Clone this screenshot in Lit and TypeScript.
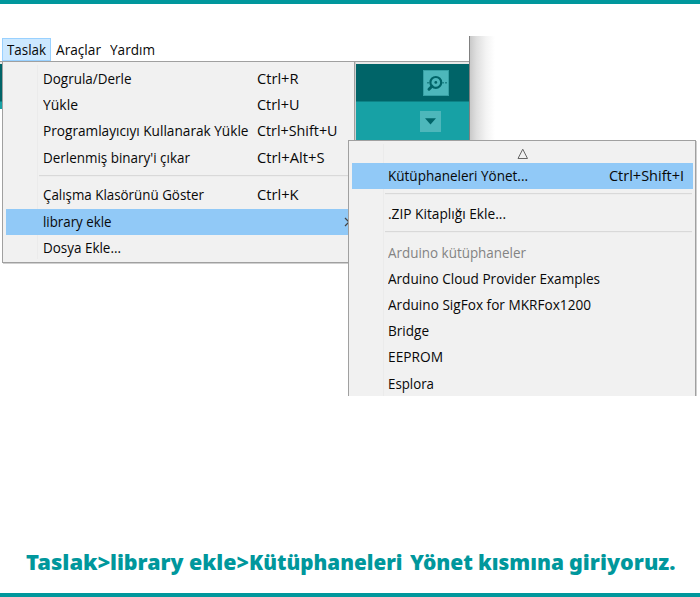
import { LitElement, html, css, nothing } from "lit";
import { customElement, property } from "lit/decorators.js";
import { styleMap } from "lit/directives/style-map.js";

// A single line of text, condensed or widened to a given advance width.
@customElement("fit-label")
class FitLabel extends LitElement {
  @property({ type: Number }) w = 0;
  static styles = css`
    :host { display: block; white-space: nowrap; }
    .t { display: inline-block; transform-origin: 0 50%; }
  `;
  firstUpdated() {
    const t = this.renderRoot.querySelector(".t") as HTMLElement;
    const natural = t.getBoundingClientRect().width;
    if (natural && this.w) t.style.transform = `scaleX(${this.w / natural})`;
  }
  render() {
    return html`<span class="t"><slot></slot></span>`;
  }
}

interface Item {
  label?: string;
  w?: number;
  keys?: string;
  kw?: number;
  active?: boolean;
  muted?: boolean;
  arrow?: boolean;
  sep?: boolean;
}

const sketchMenu: Item[] = [
  { label: "Dogrula/Derle", w: 88.5, keys: "Ctrl+R", kw: 41.5 },
  { label: "Yükle", w: 35, keys: "Ctrl+U", kw: 42.5 },
  { label: "Programlayıcıyı Kullanarak Yükle", w: 205.5, keys: "Ctrl+Shift+U", kw: 80.5 },
  { label: "Derlenmiş binary'i çıkar", w: 147, keys: "Ctrl+Alt+S", kw: 67.5 },
  { sep: true },
  { label: "Çalışma Klasörünü Göster", w: 161, keys: "Ctrl+K", kw: 41.5 },
  { label: "library ekle", w: 68.5, active: true, arrow: true },
  { label: "Dosya Ekle...", w: 78 },
];

const libraryMenu: Item[] = [
  { label: "Kütüphaneleri Yönet...", w: 140, keys: "Ctrl+Shift+I", kw: 75, active: true },
  { sep: true },
  { label: ".ZIP Kitaplığı Ekle...", w: 118 },
  { sep: true },
  { label: "Arduino kütüphaneler", w: 138, muted: true },
  { label: "Arduino Cloud Provider Examples", w: 212 },
  { label: "Arduino SigFox for MKRFox1200", w: 203 },
  { label: "Bridge", w: 41 },
  { label: "EEPROM", w: 55 },
  { label: "Esplora", w: 46 },
];

// Caption words: glyph width and the advance to the next word.
const caption = [
  { text: "Taslak>", w: 84.5, step: 84.5 },
  { text: "library ekle>", w: 139, step: 139 },
  { text: "Kütüphaneleri", w: 153.5, step: 160.5 },
  { text: "Yönet", w: 63, step: 68.5 },
  { text: "kısmına", w: 86, step: 90.5 },
  { text: "giriyoruz.", w: 106.5, step: 107 },
];

@customElement("app-root")
class AppRoot extends LitElement {
  static styles = css`
    :host {
      display: flex;
      flex-direction: column;
      box-sizing: border-box;
      width: 700px;
      height: 597px;
      overflow: hidden;
      background: #fff;
      border-top: 4px solid #00979c;
      border-bottom: 4px solid #00979c;
      font: 14px/26px "Open Sans", "Noto Sans", sans-serif;
      color: #080808;
    }
    .shot {
      position: relative;
      margin-top: 32px;
      height: 360px;
      overflow: hidden;
      flex: none;
    }
    .window { display: flex; height: 105px; }
    .ide { width: 469px; display: flex; flex-direction: column; }
    .edge {
      width: 26px;
      box-sizing: border-box;
      border-left: 1px solid #808080;
      background: linear-gradient(90deg, #c9c9c9, #dedede 25%, #f4f4f4 65%, #fff);
    }
    .bar {
      display: flex;
      box-sizing: border-box;
      height: 26px;
      padding: 2px 0 0 2px;
      border-bottom: 1px solid #a0a0a0;
    }
    .tab {
      box-sizing: border-box;
      height: 23px;
      line-height: 22px;
      border: 1px solid transparent;
      padding-left: 4px;
      width: 49px;
    }
    .tab.open { background: #cce8ff; border-color: #99d1ff; }
    .tab + .tab { width: 54px; }
    .gap { height: 2px; background: #e8e8e8; }
    .tools {
      height: 37px;
      background: #006468;
      display: flex;
      justify-content: flex-end;
      align-items: center;
      padding-right: 20px;
      border-bottom: 1px solid #0d8286;
    }
    .tabs {
      height: 39px;
      flex: none;
      background: linear-gradient(90deg, #fff 2px, transparent 2px) 0 7px no-repeat, #17a1a5;
      display: flex;
      justify-content: flex-end;
      align-items: center;
      padding-right: 28px;
    }
    svg { display: block; }
    .menu {
      position: absolute;
      box-sizing: border-box;
      border: 1px solid #a0a0a0;
      background: #f1f1f1;
      box-shadow: 1px 1px #d0d0d0;
    }
    .sketch { left: 2px; top: 25px; width: 353px; height: 202px; padding: 4px 2px 4px 3px; }
    .library { left: 348px; top: 104px; width: 348px; height: 270px; padding: 21.6px 2px 0 3px; }
    .gutter { position: absolute; top: 3px; bottom: 3px; left: 34px; width: 1px; background: #ebebeb; }
    .item { position: relative; display: flex; height: 26.2px; line-height: 26px; }
    .active { background: #91c9f7; }
    .muted { color: #838383; }
    .label { width: 215px; padding-left: 37px; flex: none; }
    .library .label { width: 221px; padding-left: 36px; }
    .sketch .label { width: 214px; }
    .sep { height: 11.6px; display: flex; align-items: flex-start; padding: 4px 1px 0 33px; box-sizing: border-box; }
    .library .sep { height: 12.3px; }
    .sep::before { content: ""; flex: 1; height: 1px; background: #d9d9d9; border-bottom: 1px solid #ededed; }
    .chevron { position: absolute; left: 338px; top: 8px; }
    .up { position: absolute; left: 168px; top: 7px; }
    .caption {
      display: flex;
      margin: 149px 0 0 25.5px;
      font-family: "Noto Sans", "Open Sans", sans-serif;
      font-size: 21.5px;
      line-height: 33px;
      font-weight: 900;
      color: #00979c;
    }
    .caption > * { flex: none; }
  `;

  row(i: Item) {
    if (i.sep) return html`<div class="sep"></div>`;
    return html`<div class="item ${i.active ? "active" : ""} ${i.muted ? "muted" : ""}">
      <fit-label class="label" .w=${i.w!}>${i.label}</fit-label>
      ${i.keys ? html`<fit-label .w=${i.kw!}>${i.keys}</fit-label>` : nothing}
      ${i.arrow
        ? html`<svg class="chevron" width="6" height="10"><path d="M1 1L5 5L1 9" fill="none" stroke="#444" stroke-width="1.2"/></svg>`
        : nothing}
    </div>`;
  }

  render() {
    return html`
      <div class="shot">
        <div class="window">
          <div class="ide">
            <div class="bar">
              <div class="tab open"><fit-label .w=${39}>Taslak</fit-label></div>
              <div class="tab"><fit-label .w=${45}>Araçlar</fit-label></div>
              <div class="tab"><fit-label .w=${45}>Yardım</fit-label></div>
            </div>
            <div class="gap"></div>
            <div class="tools">
              <svg width="26" height="26" viewBox="0 0 26 26">
                <rect x=".5" y=".5" width="25" height="25" fill="#4db7bb" stroke="#36a0a4"/>
                <circle cx="12.8" cy="12.4" r="5.4" fill="none" stroke="#006468" stroke-width="2.2"/>
                <circle cx="12.8" cy="12.4" r="1.4" fill="#006468"/>
                <path d="M9 16.2L6 19.2" stroke="#006468" stroke-width="3" stroke-linecap="round"/>
                <path d="M4 12.8h2M19 12.8h2M22 12.8h2" stroke="#1d8488" stroke-width="1.5"/>
              </svg>
            </div>
            <div class="tabs">
              <svg width="21" height="21" viewBox="0 0 21 21">
                <rect width="21" height="21" fill="#4db7bb"/>
                <path d="M5 7.2h11L10.5 13.5z" fill="#006468"/>
              </svg>
            </div>
          </div>
          <div class="edge"></div>
        </div>
        <div class="menu sketch">
          <div class="gutter"></div>
          ${sketchMenu.map((i) => this.row(i))}
        </div>
        <div class="menu library">
          <div class="gutter"></div>
          <svg class="up" width="12" height="12"><path d="M1 10.5H10.5L5.75 1.2z" fill="none" stroke="#666"/></svg>
          ${libraryMenu.map((i) => this.row(i))}
        </div>
      </div>
      <div class="caption">
        ${caption.map((c) => html`<fit-label .w=${c.w} style=${styleMap({ width: `${c.step}px` })}>${c.text}</fit-label>`)}
      </div>
    `;
  }
}
